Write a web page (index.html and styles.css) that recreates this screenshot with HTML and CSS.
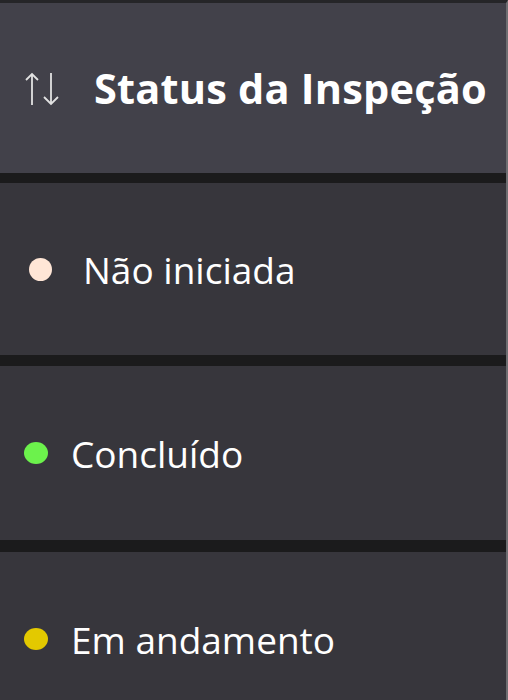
FILE: index.html
```html
<!DOCTYPE html>
<html lang="pt">
<head>
<meta charset="utf-8">
<link rel="stylesheet" href="styles.css">
</head>
<body>
<div class="panel">
  <div class="header">
    <svg class="sort-icon" width="36" height="34" viewBox="0 0 36 34" aria-hidden="true">
      <path d="M7 33V2M1 8L7 2L13 8" fill="none" stroke="#e2e2e2" stroke-width="1.8"/>
      <path d="M26 1V32M19 25L26 32L33 25" fill="none" stroke="#e2e2e2" stroke-width="1.8"/>
    </svg>
    <span class="title">Status da Inspeção</span>
  </div>
  <div class="sep"></div>
  <div class="row row-first">
    <span class="dot dot-peach"></span>
    <span class="label">Não iniciada</span>
  </div>
  <div class="sep sep-b"></div>
  <div class="row row-mid">
    <span class="dot dot-green"></span>
    <span class="label">Concluído</span>
  </div>
  <div class="sep sep-c"></div>
  <div class="row row-last">
    <span class="dot dot-yellow"></span>
    <span class="label">Em andamento</span>
  </div>
</div>
</body>
</html>
```

FILE: styles.css
```css
html, body {
  margin: 0;
  padding: 0;
  background: #37363c;
  height: 100%;
  overflow: hidden;
}

.panel {
  display: flex;
  flex-direction: column;
  height: 700px;
  overflow: hidden;
  border-top: 3px solid #252528;
  border-right: 2px solid #6e6e72;
  box-sizing: border-box;
  font-family: "Open Sans", "Noto Sans", sans-serif;
  color: #ffffff;
}

.header {
  height: 170px;
  flex: none;
  background: #42414a;
  display: flex;
  align-items: center;
  padding-left: 25px;
  gap: 33px;
}

.sort-icon {
  flex: none;
  margin-top: 2px;
}

.title {
  font-weight: 700;
  font-size: 41.5px;
  letter-spacing: 0.2px;
}

.sep {
  height: 10px;
  flex: none;
  background: #1b1b1c;
}

.sep-b { height: 11px; }
.sep-c { height: 12px; }

.row {
  flex: none;
  height: 172px;
  background: #37363c;
  display: flex;
  align-items: center;
  padding-left: 24px;
  gap: 23px;
}

.row-mid { height: 174px; }
.row-last { height: 174px; }

.row-first { padding-left: 29px; gap: 31px; }

.dot {
  width: 24px;
  height: 22px;
  border-radius: 50%;
  flex: none;
}

.dot-peach { background: #ffe6d6; width: 23px; height: 23px; }
.dot-green { background: #6cf24c; }
.dot-yellow { background: #e3c900; }

.label {
  font-size: 37px;
  font-weight: 400;
  line-height: 1;
}
```
